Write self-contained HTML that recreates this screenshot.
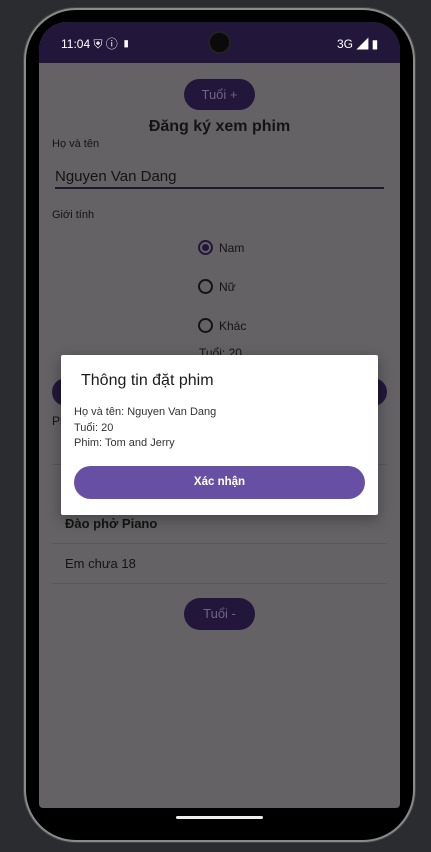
<!DOCTYPE html>
<html><head><meta charset="utf-8"><style>
*{margin:0;padding:0;box-sizing:border-box}
body{width:431px;height:852px;background:#2b2c30;position:relative;overflow:hidden;font-family:"Liberation Sans","Noto Sans CJK SC",sans-serif}
.a{position:absolute}
.frame{left:24px;top:8px;width:391px;height:834px;border-radius:52px;background:#000;border:2px solid #8a8a8a;box-shadow:0 0 0 1px #444}
.screen{left:39px;top:22px;width:361px;height:786px;border-radius:28px 28px 4px 4px;overflow:hidden;background:#646265}
.t{color:#141414;white-space:nowrap}
.pill{background:#22173a;border-radius:16px;color:#6e6585;font-size:13px;text-align:center;line-height:31px}
.div{height:1px;background:#59575a;left:13px;width:335px}
.radio{width:15px;height:15px;border-radius:50%;border:2px solid #141414}
</style></head><body>
<div class="a frame"></div>
<div class="a screen">
  <div class="a" style="left:0;top:0;width:361px;height:41px;background:#22173a"></div>
  <div class="a" style="left:22px;top:13px;color:#fff;font-size:12px">11:04 &#x26E8; &#9432; &#9646; &#8235;</div>
  <div class="a" style="left:298px;top:13px;color:#fff;font-size:12px">3G ◢ ▮</div>
  <div class="a" style="left:169px;top:9px;width:23px;height:23px;border-radius:50%;background:#0a0a0a;border:2px solid #222"></div>
  <div class="a pill" style="left:145px;top:57px;width:71px;height:31px">Tuổi +</div>
  <div class="a t" style="left:0;width:361px;text-align:center;top:96px;font-size:16px;font-weight:bold">Đăng ký xem phim</div>
  <div class="a t" style="left:13px;font-size:11px;top:116px">Họ và tên</div>
  <div class="a t" style="left:16px;top:146px;font-size:15px">Nguyen Van Dang</div>
  <div class="a" style="left:16px;top:165px;width:329px;height:2px;background:#1e1830"></div>
  <div class="a t" style="left:13px;top:187px;font-size:11px">Giới tính</div>
  <div class="a radio" style="left:159px;top:218px;border-color:#22173a"></div>
  <div class="a" style="left:163px;top:222px;width:7px;height:7px;border-radius:50%;background:#22173a"></div>
  <div class="a t" style="left:180px;top:219px;font-size:12px">Nam</div>
  <div class="a radio" style="left:159px;top:257px"></div>
  <div class="a t" style="left:180px;top:258px;font-size:12px">Nữ</div>
  <div class="a radio" style="left:159px;top:296px"></div>
  <div class="a t" style="left:180px;top:297px;font-size:12px">Khác</div>
  <div class="a t" style="left:160px;top:324px;font-size:12px">Tuổi: 20</div>
  <div class="a" style="left:13px;top:356px;width:335px;height:28px;border-radius:14px;background:#22173a"></div>
  <div class="a t" style="left:13px;top:392px;font-size:12px">Ph</div>
  <div class="a div" style="top:442px"></div>
  <div class="a t" style="left:26px;top:494px;font-size:13px;font-weight:bold">Đào phở Piano</div>
  <div class="a div" style="top:521px"></div>
  <div class="a t" style="left:26px;top:534px;font-size:13px">Em chưa 18</div>
  <div class="a div" style="top:561px"></div>
  <div class="a pill" style="left:145px;top:576px;width:71px;height:32px">Tuổi -</div>
</div>
<div class="a" style="left:176px;top:816px;width:87px;height:3px;background:#eee;border-radius:2px"></div>
<div class="a" style="left:61px;top:355px;width:317px;height:160px;background:#fff;border-radius:2px;box-shadow:0 4px 14px rgba(0,0,0,.35)">
  <div class="a t" style="left:20px;top:17px;font-size:16px;color:#1c1b1f">Thông tin đặt phim</div>
  <div class="a" style="left:13px;top:50px;font-size:11px;line-height:15.5px;color:#333">Họ và tên: Nguyen Van Dang<br>Tuổi: 20<br>Phim: Tom and Jerry</div>
  <div class="a" style="left:13px;top:111px;width:291px;height:33px;border-radius:17px;background:#6750a4;color:#fff;font-size:11.5px;font-weight:bold;text-align:center;line-height:33px">Xác nhận</div>
</div>
</body></html>
